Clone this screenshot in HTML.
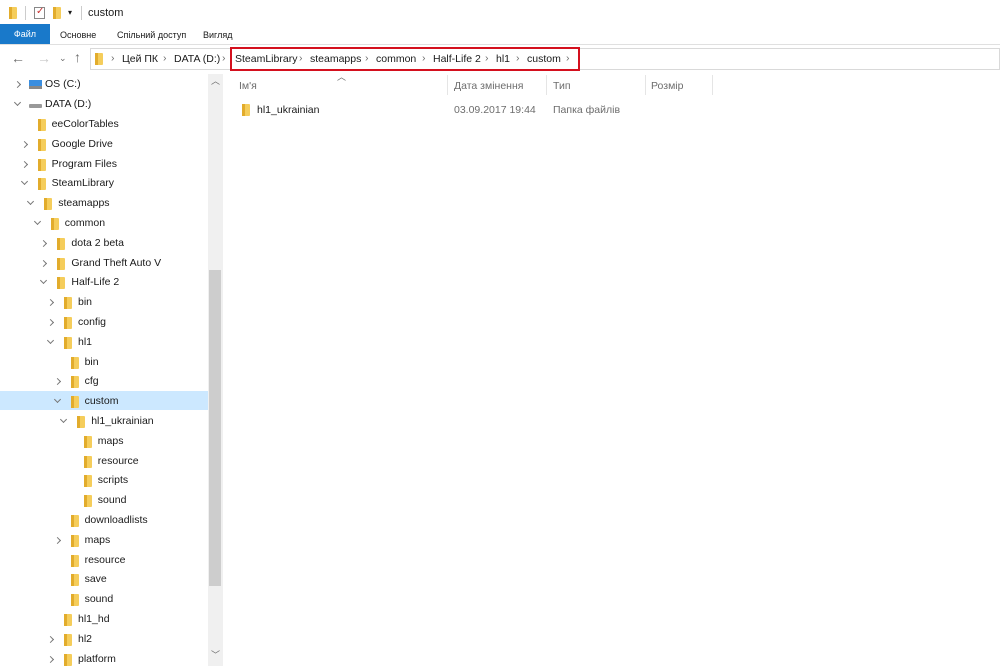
<!DOCTYPE html>
<html><head><meta charset="utf-8"><style>
*{margin:0;padding:0;box-sizing:border-box}
body{width:1000px;height:666px;overflow:hidden;background:#fff;font-family:"Liberation Sans",sans-serif;font-size:10.5px;color:#1a1a1a;position:relative}
.a{position:absolute;white-space:nowrap}
.f{position:absolute;width:8px;height:12px;background:#f5cd5b;border-radius:1px}
.f:after{content:"";position:absolute;left:0;top:0;width:3px;height:12px;background:#e2ac2c}
.c{position:absolute;width:5px;height:5px;border-right:1px solid #777;border-bottom:1px solid #777}
.r{transform:rotate(-45deg)}
.d{transform:rotate(45deg)}
.g{color:#6d6d6d}
.sep{position:absolute;width:1px;height:20px;background:#e5e5e5;top:75px}
</style></head><body>
<!-- title -->
<div class="f" style="left:9px;top:7px"></div>
<div class="a" style="left:25px;top:6px;width:1px;height:14px;background:#ccc"></div>
<div class="a" style="left:34px;top:7px;width:11px;height:12px;border:1px solid #888"></div>
<div class="a" style="left:36px;top:6px;color:#c33;font-size:10px">✓</div>
<div class="f" style="left:53px;top:7px"></div>
<div class="a" style="left:68px;top:8px;font-size:8px">▾</div>
<div class="a" style="left:81px;top:6px;width:1px;height:14px;background:#ccc"></div>
<div class="a" style="left:88px;top:7px;font-size:11px">custom</div>
<!-- tabs -->
<div class="a" style="left:0;top:24px;width:50px;height:20px;background:#1979ca;color:#fff;font-size:9px;text-align:center;line-height:20px">Файл</div>
<div class="a" style="left:60px;top:30px;font-size:9px">Основне</div>
<div class="a" style="left:117px;top:30px;font-size:9px">Спільний доступ</div>
<div class="a" style="left:203px;top:30px;font-size:9px">Вигляд</div>
<div class="a" style="left:0;top:44px;width:1000px;height:1px;background:#e0e0e0"></div>
<!-- nav -->
<div class="a g" style="left:11px;top:50px;font-size:14px">←</div>
<div class="a" style="left:37px;top:50px;font-size:14px;color:#c8c8c8">→</div>
<div class="a g" style="left:59px;top:53px;font-size:9px">⌄</div>
<div class="a g" style="left:74px;top:49px;font-size:14px">↑</div>
<div class="a" style="left:90px;top:48px;width:910px;height:22px;border:1px solid #d9d9d9"></div>
<div class="f" style="left:95px;top:53px"></div>
<div class="a g" style="left:111px;top:52px">›</div>
<div class="a" style="left:122px;top:53px">Цей ПК</div>
<div class="a g" style="left:163px;top:52px">›</div>
<div class="a" style="left:174px;top:53px">DATA (D:)</div>
<div class="a g" style="left:222px;top:52px">›</div>
<div class="a" style="left:230px;top:47px;width:350px;height:24px;border:2px solid #d4101e"></div>
<div class="a" style="left:235px;top:53px">SteamLibrary</div>
<div class="a g" style="left:299px;top:52px">›</div>
<div class="a" style="left:310px;top:53px">steamapps</div>
<div class="a g" style="left:365px;top:52px">›</div>
<div class="a" style="left:376px;top:53px">common</div>
<div class="a g" style="left:422px;top:52px">›</div>
<div class="a" style="left:433px;top:53px">Half-Life 2</div>
<div class="a g" style="left:485px;top:52px">›</div>
<div class="a" style="left:496px;top:53px">hl1</div>
<div class="a g" style="left:516px;top:52px">›</div>
<div class="a" style="left:527px;top:53px">custom</div>
<div class="a g" style="left:566px;top:52px">›</div>
<!-- columns -->
<div class="a g" style="left:337px;top:70px;font-size:9px">︿</div>
<div class="a g" style="left:239px;top:80px">Ім'я</div>
<div class="sep" style="left:447px"></div>
<div class="a g" style="left:454px;top:80px">Дата змінення</div>
<div class="sep" style="left:546px"></div>
<div class="a g" style="left:553px;top:80px">Тип</div>
<div class="sep" style="left:645px"></div>
<div class="a g" style="left:651px;top:80px">Розмір</div>
<div class="sep" style="left:712px"></div>
<div class="f" style="left:242px;top:104px"></div>
<div class="a" style="left:257px;top:104px">hl1_ukrainian</div>
<div class="a g" style="left:454px;top:104px">03.09.2017 19:44</div>
<div class="a g" style="left:553px;top:104px">Папка файлів</div>
<!-- scrollbar -->
<div class="a" style="left:208px;top:74px;width:14px;height:592px;background:#f0f0f0"></div>
<div class="a" style="left:209px;top:270px;width:12px;height:316px;background:#cdcdcd"></div>
<div class="a g" style="left:211px;top:74px;font-size:9px">︿</div>
<div class="a g" style="left:211px;top:648px;font-size:9px">﹀</div>
<div class="a" style="left:222px;top:74px;width:1px;height:592px;background:#f0f0f0"></div>
<div class="a" style="left:0;top:391px;width:208px;height:19px;background:#cce8ff"></div>
<!-- drives -->
<div class="c r" style="left:15px;top:82px"></div>
<div class="a" style="left:29px;top:80px;width:13px;height:9px;background:#3a8ee0;border-bottom:3px solid #888"></div>
<div class="a" style="left:45px;top:78px">OS (C:)</div>
<div class="c d" style="left:15px;top:100px"></div>
<div class="a" style="left:29px;top:104px;width:13px;height:4px;background:#999;border-radius:1px"></div>
<div class="a" style="left:45px;top:98px">DATA (D:)</div>
<div id="t"></div>
<script>
var L=[["eeColorTables",1,0],["Google Drive",1,1],["Program Files",1,1],["SteamLibrary",1,2],["steamapps",2,2],["common",3,2],["dota 2 beta",4,1],["Grand Theft Auto V",4,1],["Half-Life 2",4,2],["bin",5,1],["config",5,1],["hl1",5,2],["bin",6,0],["cfg",6,1],["custom",6,2],["hl1_ukrainian",7,2],["maps",8,0],["resource",8,0],["scripts",8,0],["sound",8,0],["downloadlists",6,0],["maps",6,1],["resource",6,0],["save",6,0],["sound",6,0],["hl1_hd",5,0],["hl2",5,1],["platform",5,1]];
var h="";L.forEach(function(e,i){var y=118+i*19.8,x=45+e[1]*6.6;
h+='<div class="a" style="left:'+x+'px;top:'+y+'px">'+e[0]+'</div><div class="f" style="left:'+(x-14)+'px;top:'+(y+1)+'px"></div>';
if(e[2]==1)h+='<div class="c r" style="left:'+(x-30)+'px;top:'+(y+4)+'px"></div>';
if(e[2]==2)h+='<div class="c d" style="left:'+(x-30)+'px;top:'+(y+2)+'px"></div>';});
document.getElementById("t").innerHTML=h;
</script>
</body></html>
